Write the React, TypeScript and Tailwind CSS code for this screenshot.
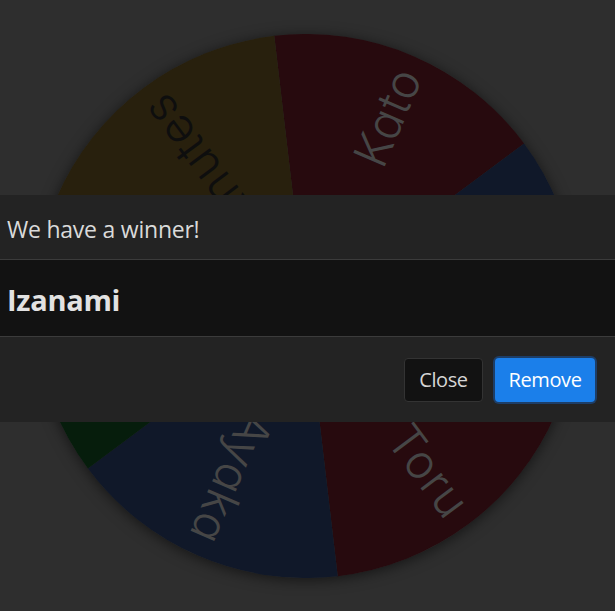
import React from "react";

type Seg = { name: string; fill: string; text: string };

const segs: Seg[] = [
  { name: "Kato", fill: "#270a0e", text: "#464646" },
  { name: "Izanami", fill: "#101829", text: "#464646" },
  { name: "Toru", fill: "#270a0e", text: "#464646" },
  { name: "Ayaka", fill: "#101829", text: "#464646" },
  { name: "Haruto", fill: "#061d0c", text: "#464646" },
  { name: "Knutes", fill: "#28200d", text: "#0e0e0e" },
];

const R = 272;
const START = -96.7;

function arc(a0: number, a1: number) {
  const r0 = (a0 * Math.PI) / 180;
  const r1 = (a1 * Math.PI) / 180;
  const x0 = R * Math.cos(r0);
  const y0 = R * Math.sin(r0);
  const x1 = R * Math.cos(r1);
  const y1 = R * Math.sin(r1);
  return `M0 0 L${x0} ${y0} A${R} ${R} 0 0 1 ${x1} ${y1} Z`;
}

function Wheel() {
  return (
    <div className="h-[544px] w-[544px] rounded-full shadow-[0_2px_14px_rgba(0,0,0,0.55)]">
      <svg width="544" height="544" viewBox="-272 -272 544 544">
        {segs.map((s, i) => {
          const a0 = START + i * 60;
          const a1 = a0 + 60;
          const mid = a0 + 30;
          return (
            <g key={s.name}>
              <path d={arc(a0, a1)} fill={s.fill} />
              <text
                transform={`rotate(${mid})`}
                x={257}
                y={17}
                textAnchor="end"
                fill={s.text}
                fontSize={47}
                className="font-light tracking-[0.02em] [font-family:Inter,sans-serif] [font-feature-settings:'cv11']"
              >
                {s.name}
              </text>
            </g>
          );
        })}
      </svg>
    </div>
  );
}

export default function App() {
  return (
    <div className="relative h-[611px] w-full overflow-hidden bg-[#2e2e2e] [font-family:'Open_Sans',sans-serif]">
      <div className="ml-[34px] pt-[34px]">
        <Wheel />
      </div>

      <div className="absolute left-0 right-0 top-[195px]">
        <div className="flex h-[65px] items-center border-b border-[#3b3b3b] bg-[#232323] px-[7px] pt-[5px]">
          <span className="text-[23px] tracking-[-0.01em] text-[#dadada]">We have a winner!</span>
        </div>
        <div className="flex h-[77px] items-center border-b border-[#3b3b3b] bg-[#121212] px-[7px] pt-[4px]">
          <span className="text-[29px] font-bold tracking-[-0.01em] text-[#e2e2e2]">Izanami</span>
        </div>
        <div className="flex h-[85px] items-center justify-end gap-[12px] bg-[#232323] pr-[20px]">
          <button className="flex h-[44px] w-[79px] items-center justify-center rounded-[4px] border border-[#333333] bg-[#121212] pt-[1px] text-[20px] tracking-[-0.02em] text-[#d6d6d6]">
            Close
          </button>
          <button className="flex h-[44px] w-[100px] items-center justify-center rounded-[4px] bg-[#1b7fea] pt-[1px] text-[20px] tracking-[-0.02em] text-white ring-2 ring-[#1d3e68]">
            Remove
          </button>
        </div>
      </div>
    </div>
  );
}
